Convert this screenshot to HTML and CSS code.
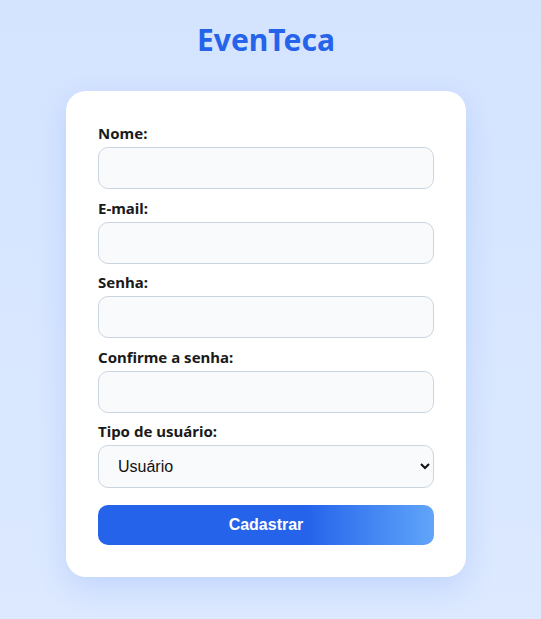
FILE: index.html
```html
<!DOCTYPE html>
<html lang="pt-BR">
<head>
<meta charset="UTF-8">
<title>EvenTeca - Cadastro</title>
<link rel="stylesheet" href="styles.css">
</head>
<body>
<main class="page">
  <h1 class="brand">EvenTeca</h1>
  <form class="card">
    <div class="field">
      <label class="label" for="nome">Nome:</label>
      <input class="input" id="nome" type="text">
    </div>
    <div class="field">
      <label class="label" for="email">E-mail:</label>
      <input class="input" id="email" type="email">
    </div>
    <div class="field">
      <label class="label" for="senha">Senha:</label>
      <input class="input" id="senha" type="password">
    </div>
    <div class="field">
      <label class="label" for="confirma">Confirme a senha:</label>
      <input class="input" id="confirma" type="password">
    </div>
    <div class="field">
      <label class="label" for="tipo">Tipo de usuário:</label>
      <select class="input select" id="tipo">
        <option>Usuário</option>
        <option>Organizador</option>
      </select>
    </div>
    <button class="submit" type="button">Cadastrar</button>
  </form>
</main>
</body>
</html>
```

FILE: styles.css
```css
* { box-sizing: border-box; }
html, body { margin: 0; padding: 0; }
body {
  min-height: 619px;
  background: linear-gradient(180deg, #d4e4ff 0%, #dce9ff 100%);
  font-family: "Noto Sans", "Open Sans", sans-serif;
}
.page {
  display: flex;
  flex-direction: column;
  align-items: center;
  padding: 19px 9px 0 0;
}
.brand {
  margin: 0 0 31px;
  font-size: 30px;
  line-height: 41px;
  font-weight: 700;
  color: #2563eb;
}
.card {
  width: 400px;
  background: #ffffff;
  border-radius: 20px;
  padding: 32px 32px 32px;
  box-shadow: 0 10px 30px rgba(37, 99, 235, 0.15);
  display: flex;
  flex-direction: column;
}
.field {
  display: flex;
  flex-direction: column;
  margin-bottom: 8.5px;
}
.label {
  font-size: 15px;
  line-height: 20px;
  font-weight: 700;
  color: #1a1a1a;
  margin-bottom: 4px;
}
.input {
  height: 42px;
  width: 100%;
  border: 1px solid #cbd5e1;
  border-radius: 10px;
  background: #f8fafc;
  font-family: "Liberation Sans", Arial, sans-serif;
  font-size: 16px;
  padding: 0 18px;
  color: #111;
}
.select {
  height: 43px;
  padding: 0 14px 0 15px;
}
.field:last-of-type { margin-bottom: 17px; }
.submit {
  height: 40px;
  width: 100%;
  border: none;
  border-radius: 10px;
  background: linear-gradient(90deg, #2563eb 0%, #2563eb 62%, #60a5fa 100%);
  color: #ffffff;
  font-family: "Liberation Sans", Arial, sans-serif;
  font-size: 16px;
  font-weight: 700;
  cursor: pointer;
}
```
